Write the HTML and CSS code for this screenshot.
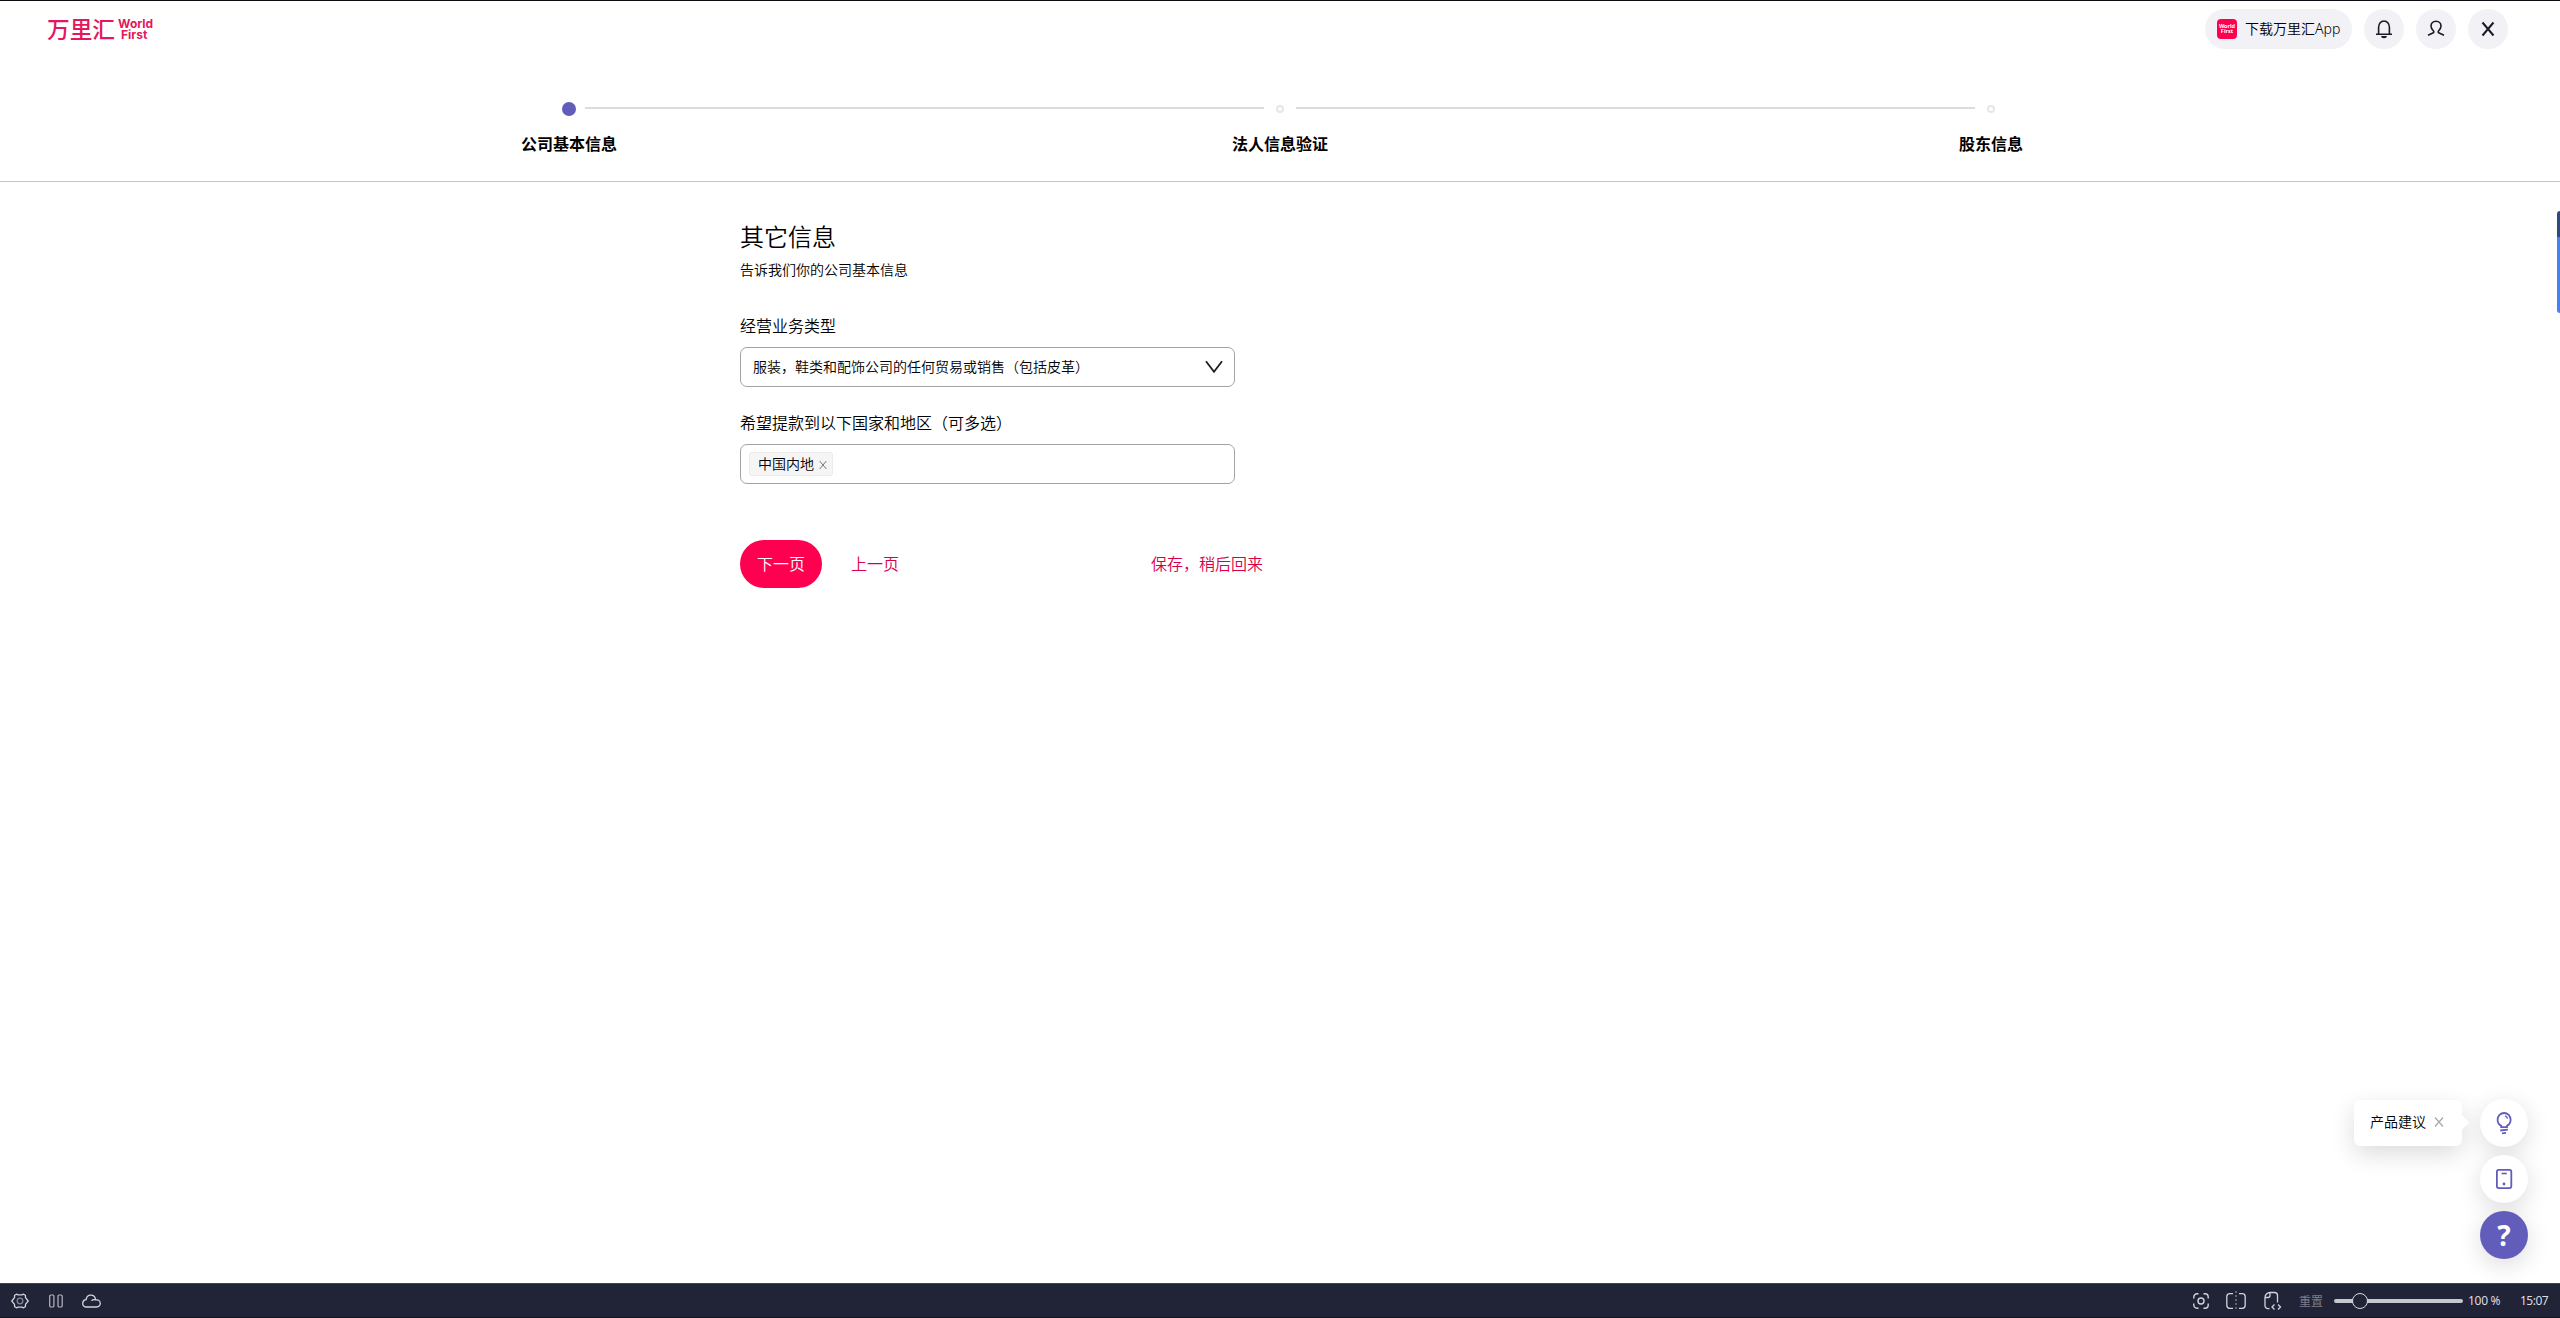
FILE: index.html
```
<!DOCTYPE html>
<html lang="zh-CN">
<head>
  <meta charset="UTF-8">
  <meta name="viewport" content="width=device-width, initial-scale=1.0">
  <title>万里汇 WorldFirst</title>
  <link rel="stylesheet" href="styles.css">
</head>
<body>

  <header class="header">
    <div class="logo">
      <span class="logo-cn">万里汇</span>
      <span class="logo-en"><span>World</span><span class="logo-first">First</span></span>
    </div>
    <div class="header-actions">
      <a class="app-pill">
        <span class="app-icon"><span>World</span><span>First</span></span>
        <span class="app-text">下载万里汇App</span>
      </a>
      <button class="circle-btn">
        <svg width="20" height="20" viewBox="0 0 20 20" fill="none" stroke="#1c1c28" stroke-width="1.6">
          <path d="M4.6 15V8.2a5.4 6.2 0 0 1 10.8 0V15M2 15.2h16"/>
          <path d="M7.2 17h5.600a2.800 2.200 0 0 1-5.600 0z" fill="#1c1c28" stroke="none"/>
        </svg>
      </button>
      <button class="circle-btn">
        <svg width="20" height="20" viewBox="0 0 20 20" fill="none" stroke="#1c1c28" stroke-width="1.6">
          <path d="M2 16.300l4.800-2.200c1.200-.6 1.300-1.500.5-2.400C5.800 10.200 5 8.700 5 7c0-2.900 2.200-4.800 5-4.800s5 1.900 5 4.800c0 1.700-.8 3.200-2.300 4.700-.8.9-.7 1.800.5 2.400l4.800 2.200"/>
        </svg>
      </button>
      <button class="circle-btn">
        <svg width="20" height="20" viewBox="0 0 20 20" fill="none" stroke="#1c1c28" stroke-width="2">
          <path d="M4.500 3.500l11 13M15.500 3.500l-11 13"/>
        </svg>
      </button>
    </div>
  </header>

  <div class="steps">
    <div class="step-track">
      <span class="dot dot-active"></span>
      <span class="line"></span>
      <span class="dot"></span>
      <span class="line"></span>
      <span class="dot"></span>
    </div>
    <div class="step-labels">
      <span>公司基本信息</span>
      <span>法人信息验证</span>
      <span>股东信息</span>
    </div>
  </div>

  <main class="form">
    <h1>其它信息</h1>
    <p class="subtitle">告诉我们你的公司基本信息</p>

    <label class="label">经营业务类型</label>
    <div class="field select">
      <span class="value">服装，鞋类和配饰公司的任何贸易或销售（包括皮革）</span>
      <svg width="18" height="14" viewBox="0 0 18 14" fill="none" stroke="#1c1c28" stroke-width="1.800">
        <path d="M1 1.200l8 10.600 8-10.600"/>
      </svg>
    </div>

    <label class="label">希望提款到以下国家和地区（可多选）</label>
    <div class="field tags">
      <span class="tag"><span class="value">中国内地</span>
        <svg width="8" height="10" viewBox="0 0 8 10" fill="none" stroke="#777" stroke-width="1">
          <path d="M.7 1l6.600 8M7.300 1L.7 9"/>
        </svg>
      </span>
    </div>

    <div class="form-actions">
      <button class="next">下一页</button>
      <a class="link">上一页</a>
      <a class="link link-save">保存，稍后回来</a>
    </div>
  </main>

  <div class="side-tab"></div>

  <div class="floating">
    <div class="tip">
      <span class="value">产品建议</span>
      <svg width="10" height="10" viewBox="0 0 10 10" fill="none" stroke="#aaa" stroke-width="1.300">
        <path d="M1 .5l8 9M9 .5l-8 9"/>
      </svg>
    </div>
    <div class="float-buttons">
      <button class="float-btn">
        <svg width="24" height="24" viewBox="0 0 24 24" fill="none" stroke="#625dba" stroke-width="1.800">
          <path d="M9.200 16.200v-1.400C7 13.600 5.600 11.300 5.600 8.700a6.500 6.700 0 0 1 13 0c0 2.600-1.400 4.900-3.600 6.100v1.400z"/>
          <path d="M13 4.900c1.300.4 2.200 1.300 2.500 2.700" stroke-width="1.500"/>
          <path d="M8.200 19.500l7.700-.8M10 22.300l4-.4"/>
        </svg>
      </button>
      <button class="float-btn">
        <svg width="24" height="24" viewBox="0 0 24 24" fill="none" stroke="#625dba" stroke-width="1.800">
          <rect x="4.900" y="2.900" width="14.400" height="18.200" rx="1.800"/>
          <path d="M9.500 6.500h5.300" stroke-width="1.600"/>
          <circle cx="12" cy="17" r="1.400" fill="#625dba" stroke="none"/>
        </svg>
      </button>
      <button class="float-btn float-help">?</button>
    </div>
  </div>

  <footer class="statusbar">
    <div class="status-left">
      <svg width="18" height="16" viewBox="0 0 18 16" fill="none" stroke="#d3d3dd" stroke-width="1.300">
        <path d="M5.500 1.200L7 1.900h4l1.500-.7 1.900 1.100.1 2.400L17.200 8l-2.700 3.300-.1 2.400-1.900 1.100-1.500-.7H7l-1.500.7-1.900-1.100-.1-2.400L.8 8l2.700-3.300.1-2.400z" stroke-linejoin="round"/>
        <circle cx="9" cy="8" r="2.800" stroke="#85869a"/>
      </svg>
      <svg width="14" height="14" viewBox="0 0 14 14" fill="none" stroke="#b7b7c2" stroke-width="1.200">
        <rect x=".7" y="1" width="4.200" height="12" rx="1.300"/>
        <rect x="9" y="1" width="4.200" height="12" rx="1.300"/>
      </svg>
      <svg width="20" height="15" viewBox="0 0 20 15" fill="none" stroke="#d3d3dd" stroke-width="1.300">
        <path d="M4.600 14h11a3.600 3.600 0 0 0 .2-7.200h-1.300A4.700 4.700 0 0 0 5.300 5.500L5.200 6.700A3.700 3.700 0 0 0 4.600 14zM10.500 7.800c.8-1 2.300-1.500 4-1"/>
      </svg>
    </div>
    <div class="status-right">
      <svg width="16" height="16" viewBox="0 0 16 16" fill="none" stroke="#d3d3dd" stroke-width="1.400">
        <path d="M.8 5.500V4A3.200 3.200 0 0 1 4 .8h1.500M10.500.8H12A3.200 3.200 0 0 1 15.200 4v1.500M15.200 10.500V12a3.200 3.200 0 0 1-3.200 3.200h-1.500M5.500 15.200H4A3.200 3.200 0 0 1 .8 12v-1.500"/>
        <circle cx="8" cy="8" r="3"/>
      </svg>
      <svg class="icon-split" width="20" height="20" viewBox="0 0 20 20" fill="none" stroke="#d3d3dd" stroke-width="1.300">
        <path d="M7 2.700H3.800A3 3 0 0 0 .8 5.700v8.600a3 3 0 0 0 3 3H7M13 2.700h3.200a3 3 0 0 1 3 3v8.600a3 3 0 0 1-3 3H13"/>
        <path d="M10 0v20" stroke="#85869a" stroke-dasharray="2 2"/>
      </svg>
      <svg class="icon-page" width="18" height="20" viewBox="0 0 18 20" fill="none" stroke="#d3d3dd" stroke-width="1.300">
        <path d="M5.500 17.700H4a3 3 0 0 1-3-3V6.500a5 5 0 0 1 5-5h4.500a3 3 0 0 1 3 3v7M6 1.300v3.200a2 2 0 0 1-2 2H1"/>
        <path d="M10.500 13.500L8 16l2.500 2.500M14 13.500l2.500 2.500-2.500 2.500"/>
      </svg>
      <span class="reset">重置</span>
      <div class="slider"><span class="thumb"></span></div>
      <span class="percent">100 %</span>
      <span class="clock">15:07</span>
    </div>
  </footer>

</body>
</html>
```
FILE: styles.css
```
* {
  box-sizing: border-box;
}
body {
  margin: 0;
  height: 1318px;
  display: flex;
  flex-direction: column;
  overflow: hidden;
  font-family: "Noto Sans", "Noto Sans CJK SC", sans-serif;
  font-size: 14px;
  font-weight: 350;
  color: #000;
  background: #fff;
}
button {
  border: none;
  padding: 0;
  font-family: inherit;
  font-weight: inherit;
}
svg {
  display: block;
  flex: none;
}

/* header */
.header {
  height: 57px;
  display: flex;
  justify-content: space-between;
  align-items: center;
  padding: 0 52px 0 47px;
  border-top: 1px solid #0c0b12;
}
.logo {
  display: flex;
  align-items: center;
  gap: 3px;
  color: #e3175a;
}
.logo-cn {
  font-family: "Noto Sans CJK SC", sans-serif;
  font-size: 22.7px;
  font-weight: 500;
  line-height: 28px;
}
.logo-en {
  display: flex;
  flex-direction: column;
  font-family: Inter, sans-serif;
  font-size: 12px;
  font-weight: 700;
  line-height: 11.5px;
}
.logo-first {
  padding-left: 3px;
}
.header-actions {
  display: flex;
  gap: 12px;
}
.app-pill {
  width: 147px;
  height: 40px;
  display: flex;
  align-items: center;
  padding-left: 12px;
  border-radius: 20px;
  background: #f2f1f6;
  white-space: nowrap;
}
.app-icon {
  width: 20px;
  height: 20px;
  margin-right: 8px;
  display: flex;
  flex-direction: column;
  align-items: center;
  justify-content: center;
  border-radius: 4px;
  background: #ff0051;
  color: #fff;
  font-size: 5.5px;
  font-weight: 700;
  line-height: 5.5px;
}
.app-text {
  padding-bottom: 2px;
}
.circle-btn {
  width: 40px;
  height: 40px;
  display: flex;
  align-items: center;
  justify-content: center;
  border-radius: 50%;
  background: #f2f1f6;
}

/* steps */
.steps {
  height: 125px;
  padding-top: 45px;
  border-bottom: 1px solid #c4c4c4;
}
.step-track {
  height: 14px;
  margin-left: 562px;
  display: flex;
  align-items: center;
  gap: 12px;
}
.dot {
  width: 8px;
  height: 8px;
  border: 2px solid #e6e6e6;
  border-radius: 50%;
}
.dot-active {
  width: 14px;
  height: 14px;
  margin-right: -3px;
  border: none;
  background: #625dba;
}
.line {
  width: 679px;
  height: 2px;
  margin-bottom: 2px;
  background: #dcdcdc;
}
.step-labels {
  width: 1518px;
  margin: 16px auto 0;
  display: flex;
  justify-content: space-between;
  font-size: 16px;
  font-weight: 700;
  line-height: 24px;
}
.step-labels span {
  width: 96px;
  text-align: center;
}

/* form */
.form {
  width: 523px;
  margin-left: 740px;
  padding-top: 37px;
  flex: 1;
}
h1 {
  margin: 0;
  font-size: 24px;
  font-weight: inherit;
  line-height: 36px;
}
.subtitle {
  margin: 4px 0 33px;
  line-height: 22px;
}
.label {
  display: block;
  margin-bottom: 9px;
  font-size: 16px;
  line-height: 24px;
}
.field {
  width: 495px;
  height: 40px;
  margin-bottom: 24px;
  display: flex;
  align-items: center;
  border: 1px solid #a3a3a3;
  border-radius: 7px;
}
.value {
  padding-bottom: 2px;
}
.select {
  justify-content: space-between;
  padding: 0 11px 0 12px;
}
.tags {
  padding-left: 8px;
}
.tag {
  width: 84px;
  height: 24px;
  display: flex;
  align-items: center;
  gap: 5px;
  padding-left: 8px;
  border: 1px solid #ececec;
  border-radius: 3px;
  background: #f5f5f5;
  white-space: nowrap;
}
.tag svg {
  margin-top: 2px;
}
.form-actions {
  margin-top: 56px;
  display: flex;
  align-items: center;
  font-size: 16px;
}
.next {
  width: 82px;
  height: 48px;
  margin-right: 29px;
  padding-bottom: 2px;
  border-radius: 24px;
  background: #ff0051;
  color: #fff;
  font-size: 16px;
}
.link {
  padding-bottom: 2px;
  color: #d8004a;
}
.link-save {
  margin-left: auto;
}

/* overlays on the right edge */
.side-tab {
  position: absolute;
  top: 211px;
  right: 0;
  width: 3px;
  height: 102px;
  border-radius: 3px 0 0 3px;
  background: linear-gradient(#2f4a7f 26px, #4480ef 26px);
}
.floating {
  position: absolute;
  right: 32px;
  top: 1099px;
  display: flex;
  gap: 18px;
}
.tip {
  position: relative;
  width: 108px;
  height: 46px;
  margin-top: 1px;
  display: flex;
  align-items: center;
  gap: 8px;
  padding: 0 0 2px 16px;
  border-radius: 6px;
  background: #fff;
  box-shadow: 0 8px 24px rgba(0, 0, 0, 0.14);
}
.tip::after {
  content: "";
  position: absolute;
  right: -5px;
  top: 17px;
  width: 11px;
  height: 11px;
  background: #fff;
  transform: rotate(45deg);
}
.float-buttons {
  display: flex;
  flex-direction: column;
  gap: 8px;
}
.float-btn {
  width: 48px;
  height: 48px;
  display: flex;
  align-items: center;
  justify-content: center;
  border-radius: 50%;
  background: #fff;
  box-shadow: 0 6px 24px rgba(0, 0, 0, 0.14);
}
.float-help {
  padding-bottom: 1px;
  background: #625dba;
  color: #fff;
  font-family: "Noto Sans", sans-serif;
  font-size: 28px;
  font-weight: 700;
}

/* status bar */
.statusbar {
  height: 35px;
  display: flex;
  justify-content: space-between;
  align-items: center;
  padding: 0 12px 0 11px;
  border-top: 1px solid #41414f;
  border-bottom: 1px solid #11121c;
  background: #212336;
  color: #dcdce4;
  font-size: 12px;
  font-weight: 400;
}
.status-left {
  display: flex;
  align-items: center;
  gap: 19px;
}
.status-left svg:nth-child(2) {
  margin-left: 1px;
  margin-right: -1px;
}
.status-right {
  display: flex;
  align-items: center;
}
.icon-split {
  margin: 0 18px 0 17px;
}
.reset {
  margin: 0 11px 0 17px;
  color: #7c7d8b;
}
.slider {
  width: 129px;
  height: 4px;
  padding-left: 18px;
  display: flex;
  align-items: center;
  border-radius: 2px;
  background: #c6c6cf;
}
.thumb {
  width: 16px;
  height: 16px;
  border: 1px solid #dcdce4;
  border-radius: 50%;
  background: #212336;
}
.percent {
  width: 33px;
  margin: 0 19px 0 5px;
  white-space: nowrap;
  letter-spacing: -0.3px;
}
.clock {
  width: 28px;
  white-space: nowrap;
  letter-spacing: -0.5px;
}
```
